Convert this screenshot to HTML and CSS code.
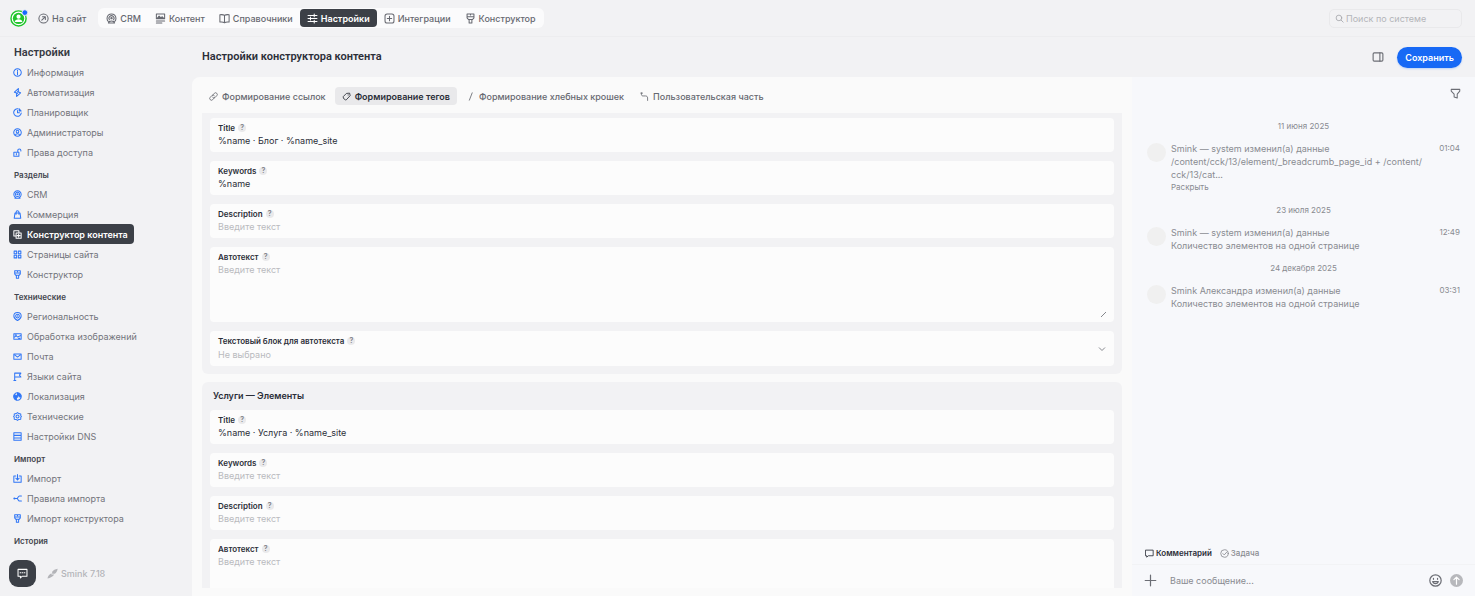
FILE: index.html
```
<!DOCTYPE html>
<html lang="ru">
<head>
    <meta charset="UTF-8">
    <meta name="viewport" content="width=device-width, initial-scale=1.0">
    <title>Настройки конструктора контента</title>
    <link rel="stylesheet" href="styles.css">
</head>
<body>
    <svg class="sprite" aria-hidden="true">
        <symbol id="i-arrow" viewBox="0 0 16 16"><circle cx="8" cy="8" r="6.7"/><path d="M5.5 10.5l5-5M6.5 5.3h4.2v4.2"/></symbol>
        <symbol id="i-crm" viewBox="0 0 16 16"><path d="M3.5 12.5a6.5 6.5 0 1 1 9 0"/><path d="M5 9.8a3.7 3.7 0 1 1 6 0"/><circle cx="8" cy="7.5" r="1"/><path d="M3.5 14.5c1-4 8-4 9 0z"/></symbol>
        <symbol id="i-content" viewBox="0 0 16 16"><path d="M2 1.5h12v7H2zM2 11.5h12M2 14.5h8"/><path d="M3 8l3-3.5 2.5 2.5 2-1.5L13 8z" fill="currentColor"/></symbol>
        <symbol id="i-book" viewBox="0 0 16 16"><path d="M8 3.5C6.5 2.3 4 2.2 1.3 2.5v10.7c2.7-.3 5.2-.2 6.7 1 1.5-1.2 4-1.3 6.7-1V2.5C12 2.2 9.5 2.3 8 3.5zv10.5"/></symbol>
        <symbol id="i-sliders" viewBox="0 0 16 16"><path d="M1.5 3.5h13M1.5 8h13M1.5 12.5h13M10.5 1.5v4M5 6v4M10.5 10.5v4"/></symbol>
        <symbol id="i-plusbox" viewBox="0 0 16 16"><rect x="1.5" y="1.5" width="13" height="13" rx="3"/><path d="M8 4.8v6.4M4.8 8h6.4"/></symbol>
        <symbol id="i-brush" viewBox="0 0 16 16"><path d="M3 1.5h10v5.5l-2 2.5H5L3 7zM3 5.5h10M6 9.5v5h4v-5M8 1.5v1.5"/></symbol>
        <symbol id="i-search" viewBox="0 0 16 16"><circle cx="7" cy="7" r="5"/><path d="M11 11l3.5 3.5"/></symbol>
        <symbol id="i-info" viewBox="0 0 16 16"><circle cx="8" cy="8" r="6.7"/><path d="M8 7v5M8 4v1.5"/></symbol>
        <symbol id="i-bolt" viewBox="0 0 16 16"><path d="M9.5 1L2.5 7.5 8 9.5l-2 1M6.5 15L13.5 8.5 8 6.5l2-1M9.5 1v4M6.5 15v-4"/></symbol>
        <symbol id="i-clock" viewBox="0 0 16 16"><path d="M9 1.4A6.7 6.7 0 1 0 14.6 9"/><path d="M8 4.5V8.5h3.5"/><path d="M11 1.5l3.5 4H11z" fill="currentColor"/></symbol>
        <symbol id="i-admin" viewBox="0 0 16 16"><circle cx="8" cy="8" r="6.7"/><circle cx="8" cy="6.5" r="2.3"/><path d="M4 13c1-3.8 7-3.8 8 0"/></symbol>
        <symbol id="i-lock" viewBox="0 0 16 16"><path d="M1.5 7.5h9v7h-9zM8.5 7.5V4.5a2.7 2.7 0 0 1 5.5 0v1M6 10v2"/></symbol>
        <symbol id="i-bag" viewBox="0 0 16 16"><path d="M3.5 5.5h9l1.3 9H2.2zM5.5 7.5V4a2.5 2.5 0 0 1 5 0v3.5"/></symbol>
        <symbol id="i-copy" viewBox="0 0 16 16"><path d="M5 10.5H1.5v-9h9V5"/><path d="M5.5 5.5h9v9h-9zM10 7.5v5M7.5 10h5"/></symbol>
        <symbol id="i-grid" viewBox="0 0 16 16"><path d="M2 2h4.5v4.5H2zM9.5 2H14v4.5H9.5zM2 9.5h4.5V14H2zM9.5 9.5H14V14H9.5z"/></symbol>
        <symbol id="i-region" viewBox="0 0 16 16"><path d="M8 15C4 13 1.5 10.5 1.5 7a6.5 6 0 0 1 13 0c0 3.5-2.5 6-6.5 8z"/><circle cx="8" cy="7.2" r="3.3"/><circle cx="8" cy="7.2" r=".5"/></symbol>
        <symbol id="i-image" viewBox="0 0 16 16"><path d="M1.5 3h13v10h-13zM2 9.5L5.5 7l3 2L14 6M4 5.2h2M10 11h2"/></symbol>
        <symbol id="i-mail" viewBox="0 0 16 16"><path d="M1.5 3.5h13v9.5h-13zM3.5 5.5L8 9l4.5-3.5"/></symbol>
        <symbol id="i-flag" viewBox="0 0 16 16"><path d="M3 15V2h11l-2.5 3.5L14 9H3M1.5 15h3.5"/></symbol>
        <symbol id="i-globe" viewBox="0 0 16 16"><circle cx="8" cy="8" r="6.7"/><path d="M2 5l5 1 1.5 3L6 10v4C3 13 1 9 2 5zM8 1.5l6 4-1 4-3-2.5-2-2z" fill="currentColor"/></symbol>
        <symbol id="i-gear" viewBox="0 0 16 16"><path d="M8 1l2.5 1.8 3.3.6v3.2L15 8l-1.2 1.5v3.2l-3.3.5L8 15l-2.5-1.8-3.3-.5V9.5L1 8l1.2-1.4V3.4l3.3-.6z"/><circle cx="8" cy="8" r="2.7"/></symbol>
        <symbol id="i-dns" viewBox="0 0 16 16"><path d="M1.5 1.5h13v13h-13zM1.5 6h13M1.5 10.5h13"/></symbol>
        <symbol id="i-import" viewBox="0 0 16 16"><path d="M5 3.5H1.5v11h13v-11H11M8 1v9.5M5 7.5l3 3 3-3"/></symbol>
        <symbol id="i-rules" viewBox="0 0 16 16"><circle cx="2.5" cy="8" r="1" fill="currentColor"/><path d="M3 8h4c2 0 2-4.5 4.5-4.5H15M7 8c2 0 2 4.5 4.5 4.5H15"/></symbol>
        <symbol id="i-chat" viewBox="0 0 16 16"><path d="M1.5 2h13v10H7.5L5 14.5V12H1.5zM4.5 7h1M7.5 7h1M10.5 7h1"/></symbol>
        <symbol id="i-feather" viewBox="0 0 16 16"><path d="M7.5 5.5C9 3 12 1.5 15.5 1c-.5 3-1.5 5.5-4 7.5H7.5zM6.5 7.5v2h4C8.5 12.5 5 14.5.8 15.2c0-3 2.5-6.5 5.7-7.7z" fill="currentColor" stroke="none"/></symbol>
        <symbol id="i-panel" viewBox="0 0 16 16"><rect x="1.5" y="2.5" width="13" height="11" rx="1.5"/><path d="M10.5 2.5v11"/></symbol>
        <symbol id="i-link" viewBox="0 0 16 16"><path d="M6.5 5.5L9.5 2.3a3 3 0 0 1 4.3 4.3L11 9.5a3 3 0 0 1-4.5 0"/><path d="M9.5 10.5L6.5 13.7a3 3 0 0 1-4.3-4.3L5 6.5a3 3 0 0 1 4.5 0"/></symbol>
        <symbol id="i-tag" viewBox="0 0 16 16"><path d="M8.5 2.5L13.5 2l1 4.5-7 7.5c-1.5 1-6-2.5-5.5-5z"/><path d="M11 5v.5"/></symbol>
        <symbol id="i-slash" viewBox="0 0 16 16"><path d="M11 1.5l-5 13"/></symbol>
        <symbol id="i-route" viewBox="0 0 16 16"><path d="M2.5 1.5v2.5c0 2 1 3 3 3h4c2.5 0 4 1 4 3.5V15M1.5 2h3"/></symbol>
        <symbol id="i-filter" viewBox="0 0 16 16"><path d="M1.8 2h12.4v2.5L10.5 9v5.5L6 13V9L1.8 4.5z"/></symbol>
        <symbol id="i-comment" viewBox="0 0 16 16"><path d="M1.5 2h13v10H6l-3 2.5V12H1.5z"/></symbol>
        <symbol id="i-task" viewBox="0 0 16 16"><circle cx="8" cy="8" r="6.7"/><path d="M5 8l2.5 2.5L12.5 5"/></symbol>
        <symbol id="i-plus" viewBox="0 0 16 16"><path d="M8 1.5v13M1.5 8h13"/></symbol>
        <symbol id="i-smile" viewBox="0 0 16 16"><circle cx="8" cy="8" r="7"/><path d="M4.5 9.5c1.5 3.3 5.5 3.3 7 0zM5.5 5.5v1M10.5 5.5v1"/></symbol>
        <symbol id="i-send" viewBox="0 0 16 16"><circle cx="8" cy="8" r="8" fill="currentColor" stroke="none"/><path d="M8 12.5V4M4.8 7L8 3.8 11.2 7" stroke="#fff"/></symbol>
    </svg>

    <header class="topbar">
        <a class="avatar" href="#" aria-label="Профиль">
            <svg viewBox="0 0 20 20" width="18" height="18">
                <circle cx="9.5" cy="10.5" r="8.4" fill="#fff" stroke="#20c52c" stroke-width="1.6"/>
                <circle cx="9.5" cy="10.5" r="6.3" fill="#20c52c"/>
                <circle cx="9.5" cy="8.5" r="2.3" fill="#fff"/>
                <path d="M5.3 14.5c0-4 8.4-4 8.4 0z" fill="#fff"/>
                <circle cx="16.5" cy="4" r="3.2" fill="#1769ff" stroke="#f2f2f4"/>
            </svg>
        </a>
        <a class="top-link" href="#"><svg class="icon"><use href="#i-arrow"/></svg>На сайт</a>
        <nav class="top-nav">
            <a class="top-link" href="#"><svg class="icon"><use href="#i-crm"/></svg>CRM</a>
            <a class="top-link" href="#"><svg class="icon"><use href="#i-content"/></svg>Контент</a>
            <a class="top-link" href="#"><svg class="icon"><use href="#i-book"/></svg>Справочники</a>
            <a class="top-link active" href="#"><svg class="icon"><use href="#i-sliders"/></svg>Настройки</a>
            <a class="top-link" href="#"><svg class="icon"><use href="#i-plusbox"/></svg>Интеграции</a>
            <a class="top-link" href="#"><svg class="icon"><use href="#i-brush"/></svg>Конструктор</a>
        </nav>
        <label class="search">
            <svg class="icon"><use href="#i-search"/></svg>
            <input type="search" placeholder="Поиск по системе" aria-label="Поиск по системе">
        </label>
    </header>

    <div class="layout">
        <aside class="sidebar">
            <h2 class="side-title">Настройки</h2>
            <nav class="side-nav">
                <a class="side-link" href="#"><svg class="icon"><use href="#i-info"/></svg>Информация</a>
                <a class="side-link" href="#"><svg class="icon"><use href="#i-bolt"/></svg>Автоматизация</a>
                <a class="side-link" href="#"><svg class="icon"><use href="#i-clock"/></svg>Планировщик</a>
                <a class="side-link" href="#"><svg class="icon"><use href="#i-admin"/></svg>Администраторы</a>
                <a class="side-link" href="#"><svg class="icon"><use href="#i-lock"/></svg>Права доступа</a>
                <h3 class="side-heading">Разделы</h3>
                <a class="side-link" href="#"><svg class="icon"><use href="#i-crm"/></svg>CRM</a>
                <a class="side-link" href="#"><svg class="icon"><use href="#i-bag"/></svg>Коммерция</a>
                <a class="side-link active" href="#"><svg class="icon"><use href="#i-copy"/></svg>Конструктор контента</a>
                <a class="side-link" href="#"><svg class="icon"><use href="#i-grid"/></svg>Страницы сайта</a>
                <a class="side-link" href="#"><svg class="icon"><use href="#i-brush"/></svg>Конструктор</a>
                <h3 class="side-heading">Технические</h3>
                <a class="side-link" href="#"><svg class="icon"><use href="#i-region"/></svg>Региональность</a>
                <a class="side-link" href="#"><svg class="icon"><use href="#i-image"/></svg>Обработка изображений</a>
                <a class="side-link" href="#"><svg class="icon"><use href="#i-mail"/></svg>Почта</a>
                <a class="side-link" href="#"><svg class="icon"><use href="#i-flag"/></svg>Языки сайта</a>
                <a class="side-link" href="#"><svg class="icon"><use href="#i-globe"/></svg>Локализация</a>
                <a class="side-link" href="#"><svg class="icon"><use href="#i-gear"/></svg>Технические</a>
                <a class="side-link" href="#"><svg class="icon"><use href="#i-dns"/></svg>Настройки DNS</a>
                <h3 class="side-heading">Импорт</h3>
                <a class="side-link" href="#"><svg class="icon"><use href="#i-import"/></svg>Импорт</a>
                <a class="side-link" href="#"><svg class="icon"><use href="#i-rules"/></svg>Правила импорта</a>
                <a class="side-link" href="#"><svg class="icon"><use href="#i-brush"/></svg>Импорт конструктора</a>
                <h3 class="side-heading">История</h3>
            </nav>
            <div class="side-footer">
                <button class="chat-btn" type="button" aria-label="Чат"><svg class="icon"><use href="#i-chat"/></svg></button>
                <span class="version"><svg class="icon"><use href="#i-feather"/></svg>Smink 7.18</span>
            </div>
        </aside>

        <main class="main">
            <div class="page-head">
                <h1>Настройки конструктора контента</h1>
                <button class="icon-btn" type="button" aria-label="Панель"><svg class="icon"><use href="#i-panel"/></svg></button>
                <button class="save-btn" type="button">Сохранить</button>
            </div>

            <div class="workspace">
                <section class="editor">
                    <div class="tabs">
                        <button class="tab" type="button"><svg class="icon"><use href="#i-link"/></svg>Формирование ссылок</button>
                        <button class="tab active" type="button"><svg class="icon"><use href="#i-tag"/></svg>Формирование тегов</button>
                        <button class="tab" type="button"><svg class="icon"><use href="#i-slash"/></svg>Формирование хлебных крошек</button>
                        <button class="tab" type="button"><svg class="icon"><use href="#i-route"/></svg>Пользовательская часть</button>
                    </div>
                    <form class="form">
                        <div class="group group-cut">
                            <label class="field"><span class="field-label">Title <i class="help">?</i></span><input type="text" value="%name · Блог · %name_site"></label>
                            <label class="field"><span class="field-label">Keywords <i class="help">?</i></span><input type="text" value="%name"></label>
                            <label class="field"><span class="field-label">Description <i class="help">?</i></span><input type="text" placeholder="Введите текст"></label>
                            <label class="field"><span class="field-label">Автотекст <i class="help">?</i></span><textarea placeholder="Введите текст"></textarea></label>
                            <label class="field"><span class="field-label">Текстовый блок для автотекста <i class="help">?</i></span><select><option>Не выбрано</option></select></label>
                        </div>
                        <div class="group">
                            <h2 class="group-title">Услуги — Элементы</h2>
                            <label class="field"><span class="field-label">Title <i class="help">?</i></span><input type="text" value="%name · Услуга · %name_site"></label>
                            <label class="field"><span class="field-label">Keywords <i class="help">?</i></span><input type="text" placeholder="Введите текст"></label>
                            <label class="field"><span class="field-label">Description <i class="help">?</i></span><input type="text" placeholder="Введите текст"></label>
                            <label class="field"><span class="field-label">Автотекст <i class="help">?</i></span><textarea placeholder="Введите текст"></textarea></label>
                        </div>
                    </form>
                </section>

                <aside class="log">
                    <div class="log-head">
                        <button class="icon-btn" type="button" aria-label="Фильтр"><svg class="icon"><use href="#i-filter"/></svg></button>
                    </div>
                    <div class="log-list">
                        <div class="log-date">11 июня 2025</div>
                        <article class="entry">
                            <span class="entry-avatar"></span>
                            <div class="entry-body">
                                <p>Smink — system изменил(а) данные</p>
                                <p>/content/cck/13/element/_breadcrumb_page_id + /content/<wbr>cck/13/cat...</p>
                                <button class="more" type="button">Раскрыть</button>
                            </div>
                            <time>01:04</time>
                        </article>
                        <div class="log-date">23 июля 2025</div>
                        <article class="entry">
                            <span class="entry-avatar"></span>
                            <div class="entry-body">
                                <p>Smink — system изменил(а) данные</p>
                                <p>Количество элементов на одной странице</p>
                            </div>
                            <time>12:49</time>
                        </article>
                        <div class="log-date">24 декабря 2025</div>
                        <article class="entry">
                            <span class="entry-avatar"></span>
                            <div class="entry-body">
                                <p>Smink Александра изменил(а) данные</p>
                                <p>Количество элементов на одной странице</p>
                            </div>
                            <time>03:31</time>
                        </article>
                    </div>
                    <div class="log-tabs">
                        <button class="log-tab active" type="button"><svg class="icon"><use href="#i-comment"/></svg>Комментарий</button>
                        <button class="log-tab" type="button"><svg class="icon"><use href="#i-task"/></svg>Задача</button>
                    </div>
                    <div class="composer">
                        <button class="icon-btn" type="button" aria-label="Прикрепить"><svg class="icon"><use href="#i-plus"/></svg></button>
                        <input type="text" placeholder="Ваше сообщение..." aria-label="Ваше сообщение">
                        <button class="icon-btn" type="button" aria-label="Эмодзи"><svg class="icon"><use href="#i-smile"/></svg></button>
                        <button class="icon-btn send" type="button" aria-label="Отправить"><svg class="icon"><use href="#i-send"/></svg></button>
                    </div>
                </aside>
            </div>
        </main>
    </div>
</body>
</html>
```
FILE: styles.css
```
* { margin: 0; padding: 0; box-sizing: border-box; }
body { height: 100vh; display: flex; flex-direction: column; overflow: hidden; background: #f2f2f4; color: #2b2e38; font-family: Inter, "Noto Sans", sans-serif; font-size: 9px; line-height: 13px; }
a { color: inherit; text-decoration: none; }
button, input, textarea, select { font: inherit; color: inherit; background: none; border: none; outline: none; }
button { cursor: pointer; }
.sprite { position: absolute; width: 0; height: 0; }
.icon { width: 11px; height: 11px; flex: none; fill: none; stroke: currentColor; stroke-width: 1.5; stroke-linejoin: round; stroke-linecap: round; }

/* top bar */
.topbar { height: 37px; flex: none; display: flex; align-items: center; padding: 0 13px 0 10px; border-bottom: 1px solid #ededef; color: #666870; font-weight: 500; }
.avatar { display: flex; margin-right: 3px; }
.top-link { display: flex; align-items: center; gap: 3px; height: 18px; padding: 0 7px; border-radius: 4px; white-space: nowrap; }
.top-link.active { background: #3c4047; color: #fff; font-weight: 600; }
.top-nav { display: flex; margin-left: 5px; padding: 1px; background: #fbfbfc; border-radius: 6px; }
.search { display: flex; align-items: center; gap: 2px; width: 133px; height: 19px; margin-left: auto; padding: 0 5px; border: 1px solid #e9e9eb; border-radius: 5px; color: #a6a7ac; }
.search .icon { width: 9px; height: 9px; }
.search input { flex: 1; min-width: 0; font-weight: 400; }
.search input::placeholder { color: #b4b5b9; }

.layout { flex: 1; min-height: 0; display: flex; }

/* sidebar */
.sidebar { width: 192px; flex: none; display: flex; flex-direction: column; padding: 8px 9px 9px; }
.side-title { margin-bottom: 1px; padding: 0 5px; font-family: Roboto, sans-serif; font-size: 11px; line-height: 16px; font-weight: 600; color: #363942; }
.side-nav { flex: 1; min-height: 0; overflow: hidden; display: flex; flex-direction: column; align-items: flex-start; }
.side-link { flex: none; display: flex; align-items: center; gap: 5px; height: 20px; padding: 0 6px 0 4px; border-radius: 4px; color: #72747b; white-space: nowrap; }
.side-link .icon { width: 9px; height: 9px; color: #2f76f6; stroke-width: 1.8; }
.side-link.active { background: #3c4047; color: #fff; font-weight: 600; }
.side-link.active .icon { color: #fff; }
.side-heading { flex: none; padding: 5px 5px 0; font-size: 8px; line-height: 17px; font-weight: 600; color: #42454d; }
.side-footer { flex: none; display: flex; align-items: center; gap: 11px; }
.chat-btn { display: flex; align-items: center; justify-content: center; width: 27px; height: 27px; border-radius: 9px; background: #3c4047; color: #fff; }
.version { display: flex; align-items: center; gap: 3px; color: #b3b4b8; font-weight: 500; }

/* content */
.main { flex: 1; min-width: 0; display: flex; flex-direction: column; }
.page-head { height: 40px; flex: none; display: flex; align-items: center; gap: 13px; padding: 0 13px 0 10px; }
.page-head h1 { flex: 1; font-family: Roboto, sans-serif; font-size: 11px; line-height: 16px; font-weight: 600; }
.icon-btn { display: flex; color: #6c6e75; }
.page-head .icon { width: 12px; height: 12px; }
.save-btn { height: 21px; padding: 0 8px; border-radius: 11px; background: #1769f5; color: #fff; font-weight: 600; box-shadow: 0 1px 2px #bcd2f7; }
.workspace { flex: 1; min-height: 0; display: flex; }
.editor { flex: 1; min-width: 0; display: flex; flex-direction: column; padding: 10px 10px 8px; background: #fafafa; border-radius: 8px 0 0 0; }
.tabs { flex: none; display: flex; gap: 2px; margin-bottom: 8px; }
.tab { display: flex; align-items: center; gap: 4px; height: 18px; padding: 0 7px; border-radius: 4px; color: #666870; font-weight: 500; white-space: nowrap; }
.tab .icon { width: 9px; height: 9px; }
.tab.active { background: #e9e9eb; color: #2b2e38; font-weight: 600; }
.form { flex: 1; min-height: 0; overflow: hidden; display: flex; flex-direction: column; gap: 8px; }
.group { flex: none; display: flex; flex-direction: column; gap: 9px; padding: 8px; background: #f2f2f4; border-radius: 6px; }
.group-cut { padding-top: 5px; border-radius: 0 0 6px 6px; }
.group-title { padding: 0 3px; font-size: 9px; line-height: 11px; font-weight: 600; }
.field { display: flex; flex-direction: column; padding: 4px 8px 5px; background: #fcfcfc; border-radius: 4px; }
.field-label { display: flex; align-items: center; gap: 3px; font-size: 8px; line-height: 12px; font-weight: 600; }
.help { width: 8px; height: 8px; border-radius: 4px; background: #e9e9eb; color: #7d7f86; font-size: 7px; line-height: 8px; font-style: normal; text-align: center; }
.field input { height: 13px; }
.field input::placeholder, .field textarea::placeholder { color: #b9babe; opacity: 1; }
.field textarea { display: block; height: 54px; resize: vertical; }
.field textarea::-webkit-resizer { background: linear-gradient(135deg, transparent 55%, #85878d 55%, #85878d 65%, transparent 65%) no-repeat right bottom / 6px 6px; }
.field select { height: 14px; appearance: none; color: #b9babe; background: url("data:image/svg+xml,%3Csvg xmlns='http://www.w3.org/2000/svg' viewBox='0 2 8 4'%3E%3Cpath d='M1 2.5l3 3 3-3' fill='none' stroke='%2385878d'/%3E%3C/svg%3E") no-repeat right top / 8px 4px; }

/* change log */
.log { width: 343px; flex: none; display: flex; flex-direction: column; background: #f7f8fb; color: #898b91; }
.log-head { flex: none; display: flex; justify-content: flex-end; padding: 11px 14px 11px; }
.log-list { flex: 1; min-height: 0; overflow: hidden; padding: 0 15px; }
.log-date { font-size: 8px; line-height: 32px; text-align: center; }
.entry { display: flex; gap: 5px; }
.entry-avatar { width: 19px; height: 19px; flex: none; margin-top: 1px; border-radius: 50%; background: #f0f0f0; }
.entry-body { flex: 1; min-width: 0; }
.entry time { font-size: 8px; line-height: 12px; }
.more { display: block; font-size: 8px; line-height: 13px; }
.log-tabs { flex: none; display: flex; gap: 8px; padding: 4px 13px; }
.log-tab { display: flex; align-items: center; gap: 2px; font-size: 8px; font-weight: 500; }
.log-tab .icon { width: 9px; height: 9px; }
.log-tab.active { color: #2b2e38; font-weight: 600; }
.composer { flex: none; display: flex; align-items: center; gap: 8px; height: 32px; padding: 0 12px 0 12px; border-top: 1px solid #f2f3f5; }
.composer .icon { width: 13px; height: 13px; }
.composer input { flex: 1; min-width: 0; padding-left: 5px; }
.composer input::placeholder { color: #898b91; }
.send { color: #b7b8bc; }
```
